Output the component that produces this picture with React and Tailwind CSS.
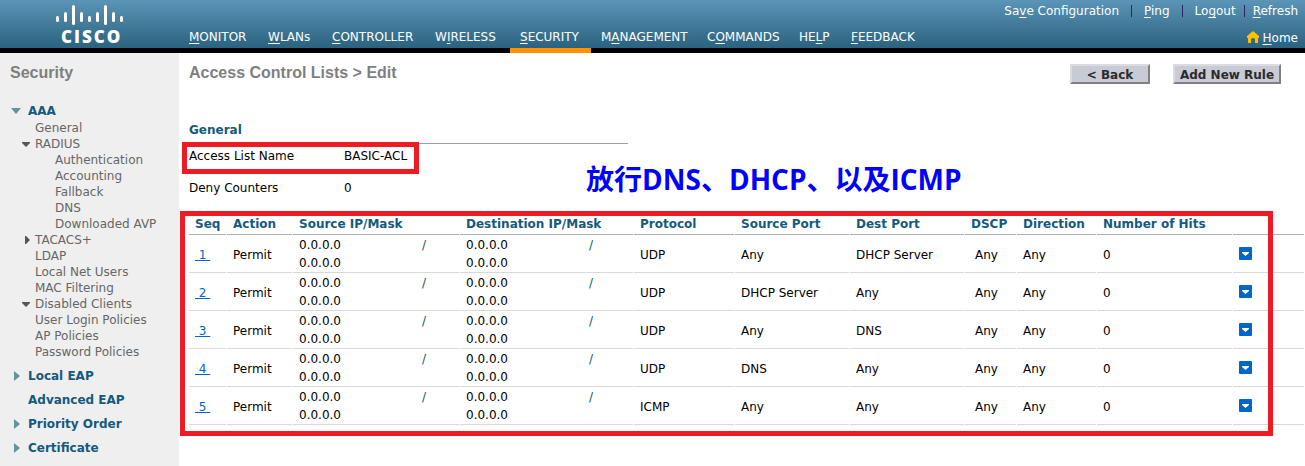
import React from "react";

const NAV = [
  "_MONITOR",
  "_WLANs",
  "_CONTROLLER",
  "W_IRELESS",
  "_SECURITY",
  "M_ANAGEMENT",
  "C_OMMANDS",
  "HE_LP",
  "_FEEDBACK",
];

const TREE = [
  { label: "General", level: 1 },
  { label: "RADIUS", level: 1, arrow: "down" },
  { label: "Authentication", level: 2 },
  { label: "Accounting", level: 2 },
  { label: "Fallback", level: 2 },
  { label: "DNS", level: 2 },
  { label: "Downloaded AVP", level: 2 },
  { label: "TACACS+", level: 1, arrow: "right" },
  { label: "LDAP", level: 1 },
  { label: "Local Net Users", level: 1 },
  { label: "MAC Filtering", level: 1 },
  { label: "Disabled Clients", level: 1, arrow: "down" },
  { label: "User Login Policies", level: 1 },
  { label: "AP Policies", level: 1 },
  { label: "Password Policies", level: 1 },
];

const SECTIONS = [
  { label: "Local EAP", arrow: true },
  { label: "Advanced EAP", arrow: false },
  { label: "Priority Order", arrow: true },
  { label: "Certificate", arrow: true },
];

const RULES = [
  { seq: 1, protocol: "UDP", source: "Any", dest: "DHCP Server" },
  { seq: 2, protocol: "UDP", source: "DHCP Server", dest: "Any" },
  { seq: 3, protocol: "UDP", source: "Any", dest: "DNS" },
  { seq: 4, protocol: "UDP", source: "DNS", dest: "Any" },
  { seq: 5, protocol: "ICMP", source: "Any", dest: "Any" },
];

const HEADS = [
  "Seq",
  "Action",
  "Source IP/Mask",
  "Destination IP/Mask",
  "Protocol",
  "Source Port",
  "Dest Port",
  "DSCP",
  "Direction",
  "Number of Hits",
];

/* The character after "_" is the underlined access key. */
function KeyLabel({ text }) {
  const i = text.indexOf("_");
  return (
    <>
      {text.slice(0, i)}
      <span className="underline underline-offset-2">{text[i + 1]}</span>
      {text.slice(i + 2)}
    </>
  );
}

function Logo() {
  const bars = [
    [56, 16, 22],
    [64, 12, 22],
    [72, 5, 25],
    [80, 12, 22],
    [88, 16, 22],
    [96, 12, 22],
    [104, 5, 25],
    [112, 12, 22],
    [120, 16, 22],
  ];
  return (
    <div className="w-[179px] shrink-0 pt-1" role="img" aria-label="Cisco">
      <svg className="ml-[56px] block" width="67" height="22" viewBox="56 4 67 22" aria-hidden="true">
        {bars.map(([x, a, b]) => (
          <rect key={x} x={x} y={a} width="3" height={b - a} rx="1.5" fill="#fff" />
        ))}
      </svg>
      <span className="mt-[3px] ml-[61px] flex h-4 items-center gap-[2px] font-['Open_Sans',sans-serif] text-[17px] leading-4 font-extrabold text-white">
        <span>C</span>
        <span>I</span>
        <span>S</span>
        <span>C</span>
        <span>O</span>
      </span>
    </div>
  );
}

function Arrow({ dir, large }) {
  const fill = large ? "#5f9696" : "#555";
  if (dir === "down") {
    return large ? (
      <svg width="10" height="6" viewBox="0 0 10 6" aria-hidden="true">
        <path d="M0 0h10L5 6z" fill={fill} />
      </svg>
    ) : (
      <svg width="8" height="5" viewBox="0 0 8 5" aria-hidden="true">
        <path d="M0 0h8v1L4 5 0 1z" fill={fill} />
      </svg>
    );
  }
  return large ? (
    <svg width="6" height="10" viewBox="0 0 6 10" aria-hidden="true">
      <path d="M0 0l6 5-6 5z" fill={fill} />
    </svg>
  ) : (
    <svg width="5" height="8" viewBox="0 0 5 8" aria-hidden="true">
      <path d="M0 0h1l4 4-4 4H0z" fill={fill} />
    </svg>
  );
}

function Separator({ className }) {
  return <span className={"h-3 w-px bg-[#332266] " + className} />;
}

function Header() {
  return (
    <header className="flex h-[53px] border-b-5 border-black bg-linear-to-b from-[#5b95b7] to-[#2b627f] text-white">
      <Logo />
      <nav
        className="grid grid-cols-[79px_64px_103px_85px_81px_106px_92px_52px_85px] items-end whitespace-nowrap"
        aria-label="Main"
      >
        {NAV.map((n) => (
          <a
            key={n}
            href="#"
            className={
              "-mb-[5px] flex h-[27px] items-center border-b-5 px-[10px] " +
              (n === "_SECURITY" ? "border-[#ff9000]" : "border-transparent")
            }
          >
            <span>
              <KeyLabel text={n} />
            </span>
          </a>
        ))}
      </nav>
      <div className="ml-auto flex flex-col items-end pr-[7px] whitespace-nowrap">
        <div className="flex h-[22px] items-center">
          <a href="#"><KeyLabel text="Sa_ve Configuration" /></a>
          <Separator className="mx-3" />
          <a href="#"><KeyLabel text="_Ping" /></a>
          <Separator className="mx-3" />
          <a href="#"><KeyLabel text="Lo_gout" /></a>
          <Separator className="mx-2" />
          <a href="#"><KeyLabel text="_Refresh" /></a>
        </div>
        <a href="#" className="mt-[6px] flex h-5 items-center gap-1">
          <svg className="-mt-[3px]" width="12" height="12" viewBox="0 0 12 12" aria-hidden="true">
            <path d="M6 0L0 5v2h1v5h3V8q2-2 4 0v4h3V7h1V5z" fill="#fdc100" />
          </svg>
          <span><KeyLabel text="_Home" /></span>
        </a>
      </div>
    </header>
  );
}

function Sidebar() {
  return (
    <aside className="w-[179px] shrink-0 bg-[#efefef]">
      <h2 className="mt-[10px] pl-[10px] font-['Liberation_Sans',Arial,sans-serif] text-[16px] leading-5 font-bold text-[#7f7f7f]">
        Security
      </h2>
      <div className="mt-[19px] flex h-[18px] items-center font-bold text-[#15597d]">
        <span className="flex w-[28px] pl-[11px]"><Arrow dir="down" large /></span>
        <a href="#">AAA</a>
      </div>
      <ul className="leading-4 text-[#666]">
        {TREE.map((t) => (
          <li key={t.label} className="flex h-4 items-center whitespace-nowrap">
            <span className={t.level === 2 ? "w-[55px]" : "flex w-[35px] justify-end pr-[5px]"}>
              {t.arrow && <Arrow dir={t.arrow} />}
            </span>
            <a href="#">{t.label}</a>
          </li>
        ))}
      </ul>
      <ul className="mt-1 font-bold text-[#15597d]">
        {SECTIONS.map((s) => (
          <li key={s.label} className="flex h-6 items-center whitespace-nowrap">
            <span className="flex w-[28px] pl-[14px]">{s.arrow && <Arrow dir="right" large />}</span>
            <a href="#">{s.label}</a>
          </li>
        ))}
      </ul>
    </aside>
  );
}

function Address() {
  return (
    <div className="flex leading-[18px]">
      <div className="w-[123px]">
        <div>0.0.0.0</div>
        <div>0.0.0.0</div>
      </div>
      <span className="text-[#15595d]">/</span>
    </div>
  );
}

function RuleTable() {
  const line = "border-b border-[#d9d9d9] ";
  const cell = line + "pt-[2px] pl-[6px]";
  const address = line + "pt-px pl-[6px]";
  return (
    <table className="w-full table-fixed border-separate border-spacing-x-px border-spacing-y-0 text-left whitespace-nowrap">
      <colgroup>
        <col className="w-[37px]" />
        <col className="w-[65px]" />
        <col className="w-[166px]" />
        <col className="w-[173px]" />
        <col className="w-[100px]" />
        <col className="w-[114px]" />
        <col className="w-[114px]" />
        <col className="w-[51px]" />
        <col className="w-[79px]" />
        <col className="w-[135px]" />
        <col />
      </colgroup>
      <thead>
        <tr className="h-[21px] text-[#15597d]">
          {HEADS.map((h) => (
            <th key={h} scope="col" className="border-b border-[#b0b0b0] p-0 pl-[6px] font-bold">
              {h}
            </th>
          ))}
          <td className="border-b border-[#b0b0b0] p-0" />
        </tr>
      </thead>
      <tbody>
        {RULES.map((r) => (
          <tr key={r.seq} className="h-[38px]">
            <td className={cell}>
              <a href="#" className="whitespace-pre text-[#0066cc] underline underline-offset-1">
                {"\u00a0" + r.seq + "\u00a0"}
              </a>
            </td>
            <td className={cell}>Permit</td>
            <td className={address}><Address /></td>
            <td className={address}><Address /></td>
            <td className={cell}>{r.protocol}</td>
            <td className={cell}>{r.source}</td>
            <td className={cell}>{r.dest}</td>
            <td className={line + "pt-[2px] pl-[10px]"}>Any</td>
            <td className={cell}>Any</td>
            <td className={cell}>0</td>
            <td className={line + "pl-[6px]"}>
              <button type="button" aria-label={"Rule " + r.seq + " actions"} className="block size-[13px] rounded-[1px] bg-[#0066cc]">
                <svg width="13" height="13" viewBox="0 0 13 13" aria-hidden="true">
                  <path d="M3 5h7v1L6.500 9 3 6z" fill="#fff" />
                </svg>
              </button>
            </td>
          </tr>
        ))}
      </tbody>
    </table>
  );
}

function PushButton({ children, className }) {
  return (
    <button
      type="button"
      className={
        "flex h-5 items-center justify-center border-2 border-t-[#dcdce0] border-r-[#808080] border-b-[#808080] border-l-[#dcdce0] bg-[#c8cad6] pt-px font-bold whitespace-nowrap text-[#2b2b2b] " +
        className
      }
    >
      {children}
    </button>
  );
}

export default function App() {
  return (
    <div className="flex min-h-screen flex-col bg-white font-['DejaVu_Sans',Verdana,sans-serif] text-[12px] text-black">
      <Header />
      <div className="flex grow">
        <Sidebar />
        <main className="min-w-0 grow">
          <div className="flex items-start pt-[10px] pr-6 pl-[10px]">
            <h1 className="font-['Liberation_Sans',Arial,sans-serif] text-[16px] leading-5 font-bold text-[#7f7f7f]">
              Access Control Lists &gt; Edit
            </h1>
            <div className="ml-auto flex gap-[23px] pt-px">
              <PushButton className="w-20">&lt; Back</PushButton>
              <PushButton className="w-[108px]">Add New Rule</PushButton>
            </div>
          </div>

          <section className="relative mt-9 pl-[10px]">
            <h2 className="w-[439px] border-b border-[#9999bb] pt-px pb-1 leading-[18px] font-bold text-[#15597d]">
              General
            </h2>
            <dl>
              <div className="relative flex h-6 items-center">
                <dt className="w-[155px]">Access List Name</dt>
                <dd>BASIC-ACL</dd>
                <div className="pointer-events-none absolute -top-[2px] -left-[7px] h-8 w-[237px] border-5 border-[#ed1c24]" />
              </div>
              <div className="mt-2 flex h-6 items-center">
                <dt className="w-[155px]">Deny Counters</dt>
                <dd>0</dd>
              </div>
            </dl>
            <p className="absolute top-[41px] left-[407px] font-['Open_Sans','Noto_Sans_CJK_SC',sans-serif] text-[28px] leading-9 font-bold whitespace-nowrap text-[#0000ff]">
              放行DNS、DHCP、以及ICMP
            </p>
          </section>

          <section className="relative mt-[14px] pl-[9px]">
            <RuleTable />
            <div className="pointer-events-none absolute -top-[3px] right-8 -bottom-[11px] left-px border-5 border-[#ed1c24]" />
          </section>
        </main>
      </div>
    </div>
  );
}
